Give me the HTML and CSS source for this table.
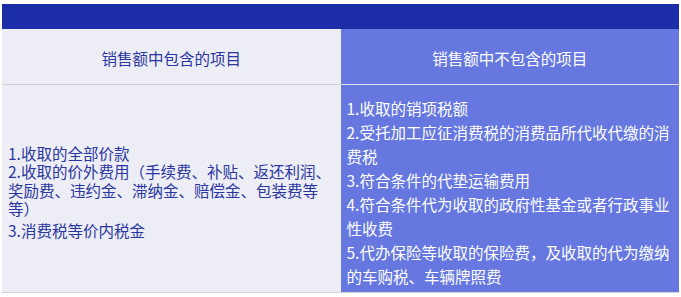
FILE: index.html
```html
<!DOCTYPE html>
<html lang="zh-CN">
<head>
    <meta charset="UTF-8">
    <title>销售额的范围</title>
    <link rel="stylesheet" href="styles.css">
</head>
<body>
    <table class="scope-table">
        <thead>
            <tr class="band">
                <th colspan="2"></th>
            </tr>
            <tr class="head-row">
                <th class="col-in">销售额中包含的项目</th>
                <th class="col-out">销售额中不包含的项目</th>
            </tr>
        </thead>
        <tbody>
            <tr class="body-row">
                <td class="col-in">
                    <div class="item">1.收取的全部价款</div>
                    <div class="item">2.收取的价外费用（手续费、补贴、返还利润、奖励费、违约金、滞纳金、赔偿金、包装费等等）</div>
                    <div class="item item-last">3.消费税等价内税金</div>
                </td>
                <td class="col-out">
                    1.收取的销项税额<br>
                    2.受托加工应征消费税的消费品所代收代缴的消费税<br>
                    3.符合条件的代垫运输费用<br>
                    4.符合条件代为收取的政府性基金或者行政事业性收费<br>
                    5.代办保险等收取的保险费，及收取的代为缴纳的车购税、车辆牌照费
                </td>
            </tr>
        </tbody>
    </table>
</body>
</html>
```

FILE: styles.css
```css
:root {
    --band: #1b2ea8;
    --pale: #ecedf5;
    --blue: #6678e0;
    --ink: #2b36a0;
}

* {
    margin: 0;
    padding: 0;
    box-sizing: border-box;
}

body {
    padding: 4px 2px 0;
    background: #ffffff;
    font-family: "Noto Sans CJK SC", "Liberation Sans", sans-serif;
    font-size: 15.5px;
}

.scope-table {
    width: 100%;
    border-collapse: collapse;
    table-layout: fixed;
}

.band th {
    height: 25px;
    background: var(--band);
}

.head-row th {
    height: 55px;
    font-weight: 400;
    text-align: center;
    vertical-align: middle;
    padding-top: 3px;
    border-bottom: 1px solid #cfcfd4;
}

.col-in {
    background: var(--pale);
    color: var(--ink);
}

.col-out {
    background: var(--blue);
    color: #ffffff;
}

.head-row .col-out {
    border-bottom-color: #dcdff2;
}

.body-row td {
    height: 208px;
    padding: 11px 6px 4px 6px;
    vertical-align: middle;
    text-align: left;
    border-bottom: 1px solid #d4d4d8;
}

.body-row .col-in {
    line-height: 18.4px;
}

.body-row .col-out {
    line-height: 24.1px;
}

.item-last {
    margin-top: 4px;
}
```
